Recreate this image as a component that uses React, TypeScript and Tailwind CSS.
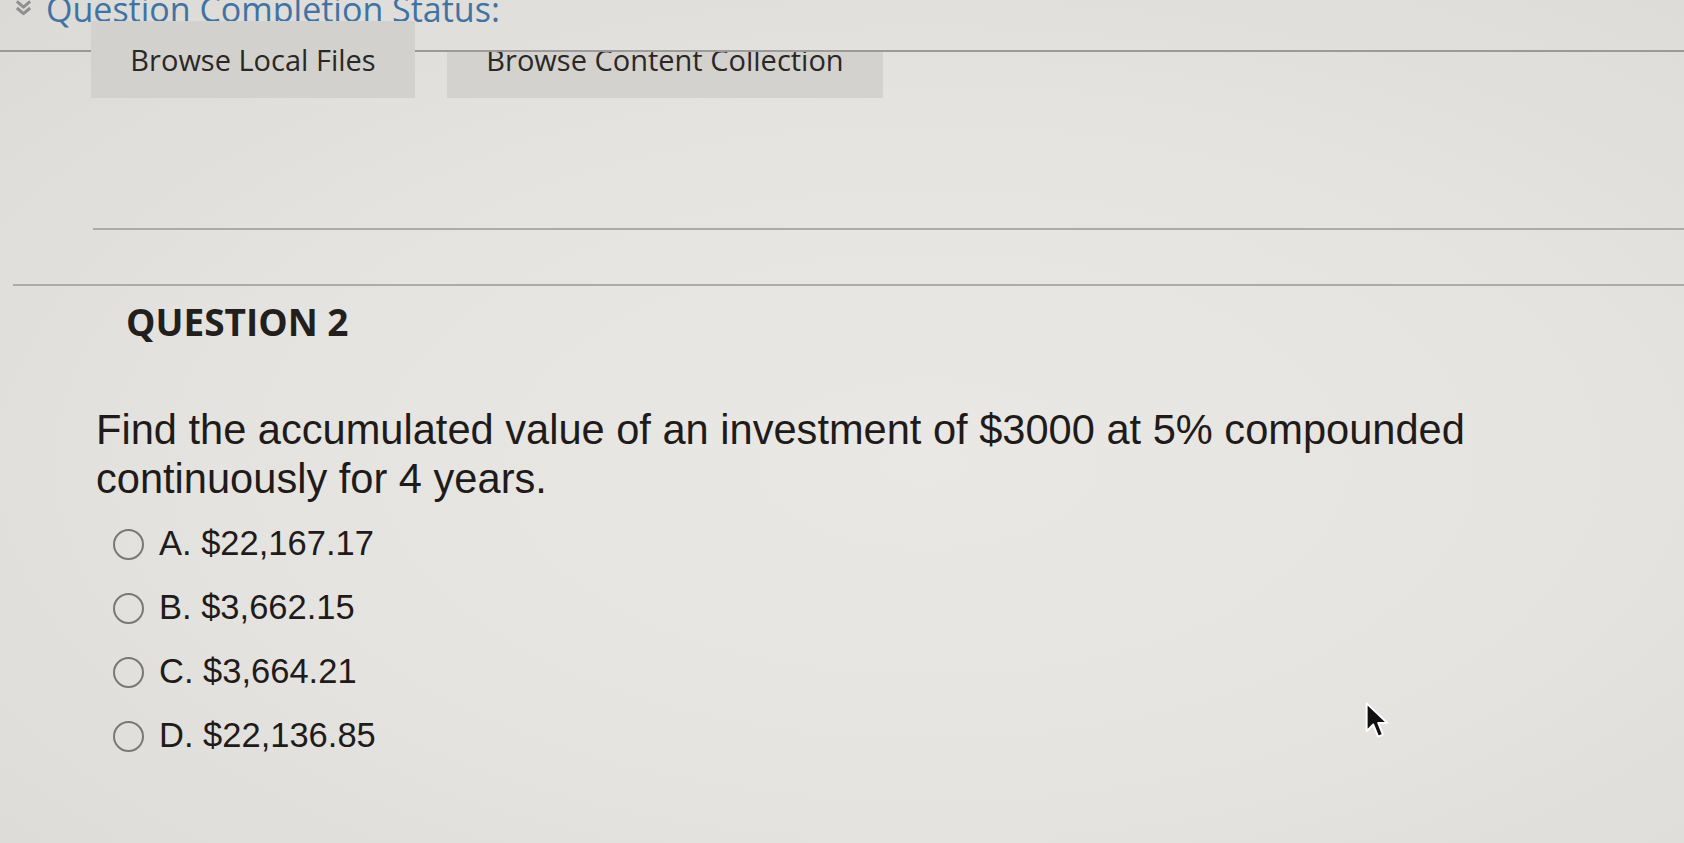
import React from 'react';

const options = [
  { id: 'A', value: '$22,167.17' },
  { id: 'B', value: '$3,662.15' },
  { id: 'C', value: '$3,664.21' },
  { id: 'D', value: '$22,136.85' },
];

function ChevronsIcon() {
  return (
    <svg viewBox="0 0 20 16" className="w-[19px] h-[16px] shrink-0" fill="none">
      <path d="M3 1 L10 7 L17 1" stroke="#8f8f8f" strokeWidth="3.2" strokeLinejoin="round" />
      <path d="M3 8 L10 14 L17 8" stroke="#8f8f8f" strokeWidth="3.2" strokeLinejoin="round" />
    </svg>
  );
}

function Cursor() {
  return (
    <svg viewBox="0 0 22 34" className="absolute left-[1364px] top-[701px] w-[27px] h-[41px]">
      <path
        d="M2 2 L2 25 L7.5 19.5 L11.5 29.5 L15.5 27.8 L11.6 18.2 L19.2 18.2 Z"
        fill="#111"
        stroke="#fff"
        strokeWidth="1.6"
        strokeLinejoin="round"
      />
    </svg>
  );
}

export default function App() {
  return (
    <div className="relative h-[843px] w-full overflow-hidden bg-[radial-gradient(ellipse_at_55%_55%,#eae8e4_0%,#e5e3df_55%,#dcdad6_100%)]">
      {/* status line, cut off at the top */}
      <div className="flex h-[21px] items-start pl-[14px]">
        <ChevronsIcon />
        <span className="ml-[13px] -mt-[8px] whitespace-nowrap text-[34px] leading-[34px] text-[#3f73a3] [font-family:'Open_Sans',sans-serif]">
          Question Completion Status:
        </span>
      </div>

      {/* attach buttons */}
      <div className="mt-[29px] flex items-start gap-[32px] border-t-2 border-[#9b9a98] pl-[91px] [font-family:'Open_Sans',sans-serif]">
        <div className="-mt-[31px] flex h-[77px] w-[324px] items-center justify-center bg-[#d3d1cd] text-[29px] leading-[29px] text-[#2a2826]">
          Browse Local Files
        </div>
        <div className="h-[46px] w-[436px] overflow-hidden bg-[#d4d2ce] text-center text-[29px] leading-[29px] text-[#2a2826]">
          <div className="-mt-[7px]">Browse Content Collection</div>
        </div>
      </div>

      <div className="ml-[93px] mt-[130px] border-t-2 border-[#adaba8]" />
      <div className="ml-[13px] mt-[54px] border-t-2 border-[#adaba8]" />

      {/* question */}
      <h2 className="mt-[17px] pl-[126px] text-[37px] font-bold leading-[38px] text-[#231f1d] [font-family:'Open_Sans',sans-serif]">
        QUESTION 2
      </h2>

      <p className="mt-[64px] w-[1560px] pl-[96px] text-[41.6px] leading-[49px] text-[#1f1b1a] [font-family:'Liberation_Sans',Arial,sans-serif]">
        Find the accumulated value of an investment of $3000 at 5% compounded continuously for 4 years.
      </p>

      <div className="mt-[9px] flex flex-col pl-[113px] [font-family:'Liberation_Sans',Arial,sans-serif]">
        {options.map((o) => (
          <label key={o.id} className="flex h-[64px] items-center gap-[15px]">
            <span className="h-[31px] w-[31px] rounded-full border-2 border-[#7a7876]" />
            <span className="text-[34.5px] text-[#1f1b1a]">
              {o.id}. {o.value}
            </span>
          </label>
        ))}
      </div>

      <Cursor />
    </div>
  );
}
